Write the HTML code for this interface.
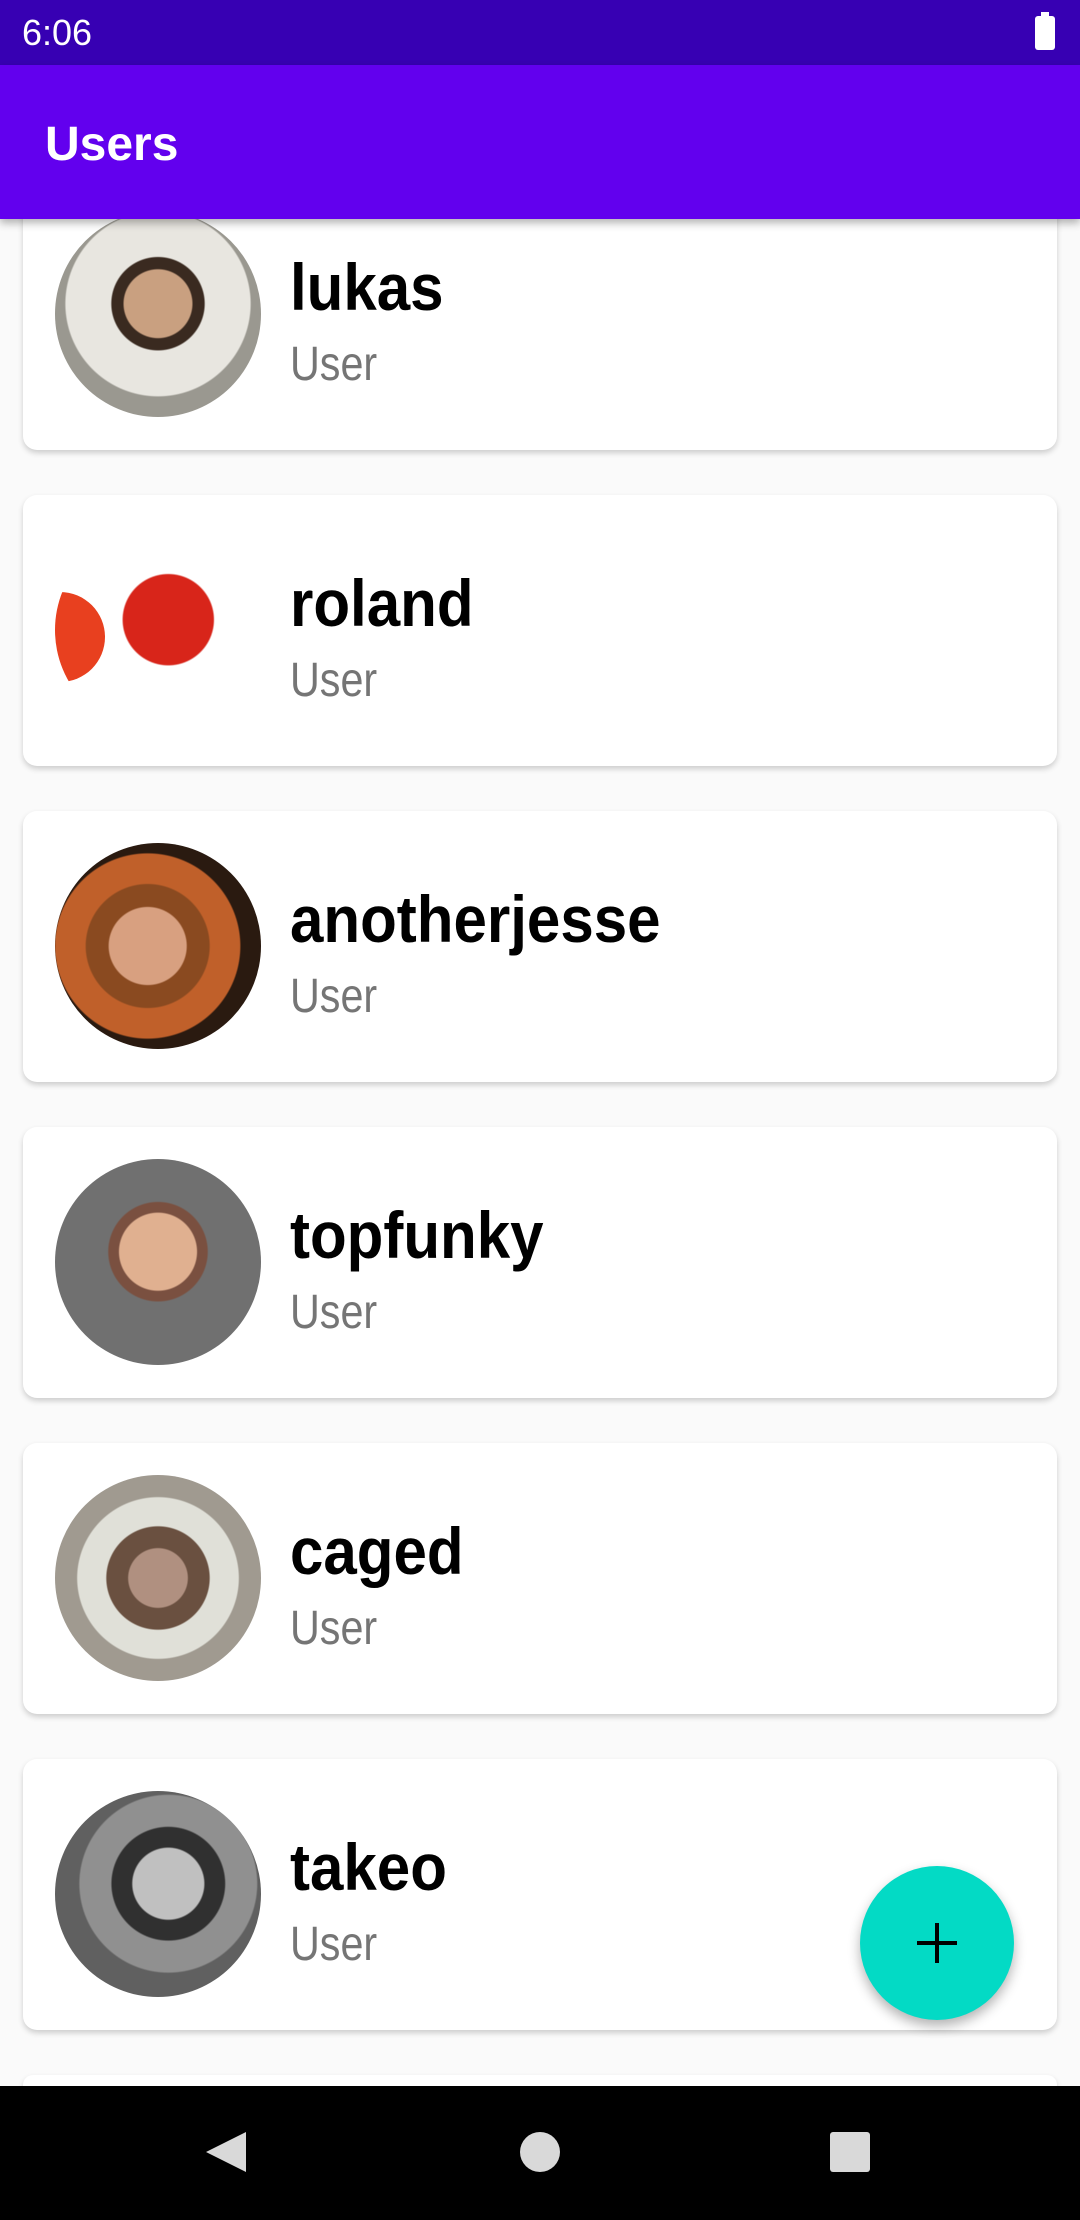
<!DOCTYPE html>
<html style="overflow:hidden;height:2220px"><head><meta charset="utf-8"><style>
*{margin:0;padding:0;box-sizing:border-box}
body{width:1080px;height:2220px;overflow:hidden;background:#fafafa;font-family:"Liberation Sans",sans-serif;position:relative}
.status{position:absolute;top:0;left:0;width:1080px;height:65px;background:#3700b3;color:#fff;font-size:36px}
.status .t{position:absolute;left:22px;top:12px}
.bat{position:absolute;right:25px;top:16px;width:20px;height:34px;background:#fff;border-radius:3px}
.bat:before{content:"";position:absolute;left:6px;top:-4px;width:8px;height:5px;background:#fff}
.app{position:absolute;top:65px;left:0;width:1080px;height:154px;background:#6200ee;box-shadow:0 4px 8px rgba(0,0,0,.3);z-index:5}
.app span{position:absolute;left:45px;top:52px;color:#fff;font-size:48px;font-weight:bold}
.card{position:absolute;left:23px;width:1034px;height:271px;background:#fff;border-radius:14px;box-shadow:0 3px 6px rgba(0,0,0,.18);overflow:hidden}
.av{position:absolute;left:32px;top:32px;width:206px;height:206px;border-radius:50%;overflow:hidden}
.nm{position:absolute;left:267px;top:70px;font-size:66px;font-weight:bold;color:#000;transform:scaleX(.91);transform-origin:left;white-space:nowrap}
.us{position:absolute;left:267px;top:158px;font-size:48px;color:#757575;transform:scaleX(.86);transform-origin:left;font-weight:300}
.fab{position:absolute;left:860px;top:1866px;width:154px;height:154px;border-radius:50%;background:#03dac5;box-shadow:0 6px 12px rgba(0,0,0,.3);z-index:6}
.fab:before{content:"";position:absolute;left:57px;top:75px;width:40px;height:4px;background:#000}
.fab:after{content:"";position:absolute;left:75px;top:57px;width:4px;height:40px;background:#000}
.nav{position:absolute;left:0;top:2086px;width:1080px;height:134px;background:#000;z-index:7}
</style></head><body>
<div class="status"><span class="t">6:06</span><div class="bat"></div></div>
<div class="app"><span>Users</span></div>

<div class="card" style="top:179px"><div class="av" style="background:radial-gradient(circle at 50% 45%,#c9a080 0 22%,#3a2a20 23% 30%,#e8e6e0 31% 60%,#9a9890 61%)"></div><div class="nm">lukas</div><div class="us">User</div></div>
<div class="card" style="top:495px"><div class="av" style="background:radial-gradient(circle at 55% 45%,#d8251a 0 28%,#fff 29%)"><div style="position:absolute;left:0;top:65px;width:50px;height:90px;border-radius:0 45px 45px 0;background:#e8401f"></div></div><div class="nm">roland</div><div class="us">User</div></div>
<div class="card" style="top:811px"><div class="av" style="background:radial-gradient(circle at 45% 50%,#d8a080 0 25%,#8a4a20 26% 40%,#c0602a 41% 60%,#2a1a10 61%)"></div><div class="nm">anotherjesse</div><div class="us">User</div></div>
<div class="card" style="top:1127px"><div class="av" style="background:radial-gradient(circle at 50% 45%,#e0b090 0 25%,#7a5040 26% 32%,#707070 33%)"></div><div class="nm">topfunky</div><div class="us">User</div></div>
<div class="card" style="top:1443px"><div class="av" style="background:radial-gradient(circle at 50% 50%,#b09080 0 20%,#6a5040 21% 35%,#e0e0d8 36% 55%,#a09a90 56%)"></div><div class="nm">caged</div><div class="us">User</div></div>
<div class="card" style="top:1759px"><div class="av" style="background:radial-gradient(circle at 55% 45%,#c0c0c0 0 22%,#303030 23% 35%,#909090 36% 55%,#606060 56%)"></div><div class="nm">takeo</div><div class="us">User</div></div>
<div class="card" style="top:2075px;height:20px"></div>

<div class="fab"></div>
<div class="nav">
<svg width="1080" height="134"><polygon points="246,46 206,66 246,86" fill="#fff" opacity=".85"/><circle cx="540" cy="66" r="20" fill="#fff" opacity=".85"/><rect x="830" y="46" width="40" height="40" rx="3" fill="#fff" opacity=".85"/></svg>
</div>
</body></html>
